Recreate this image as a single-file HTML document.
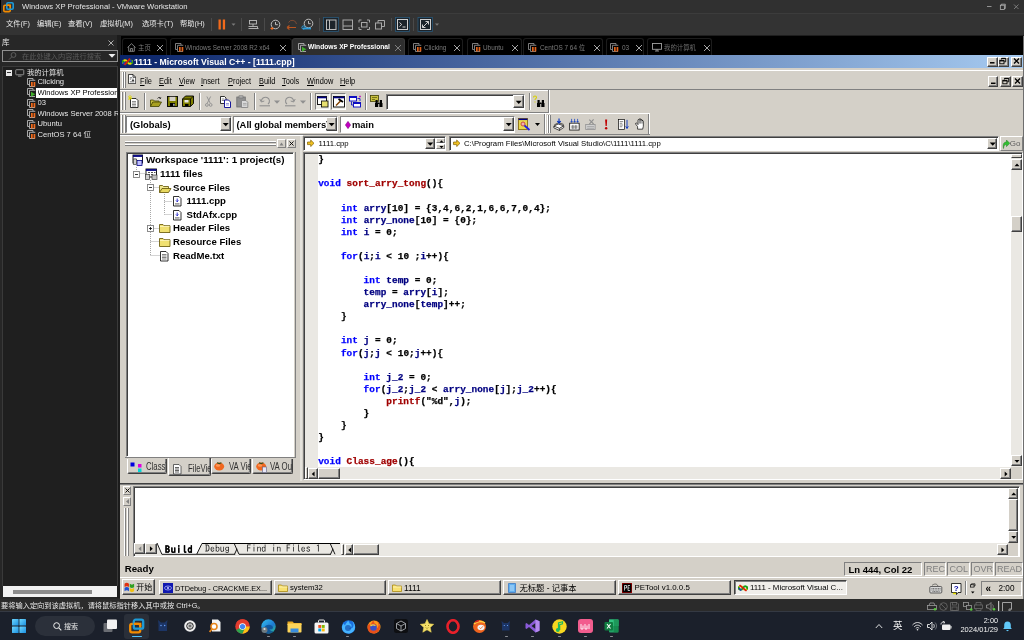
<!DOCTYPE html>
<html lang="zh">
<head>
<meta charset="utf-8">
<title>Windows XP Professional - VMware Workstation</title>
<style>
*{box-sizing:border-box;margin:0;padding:0}
html,body{width:1024px;height:640px;overflow:hidden;background:#1e1e1e}
body{position:relative;font-family:"Liberation Sans","Noto Sans CJK SC",sans-serif;font-size:8px;color:#000}
.a{position:absolute}
.t{position:absolute;white-space:nowrap;line-height:1}
/* ---------- VMware chrome ---------- */
#vmtitle{left:0;top:0;width:1024px;height:13px;background:#303030}
#vmmenu{left:0;top:13px;width:1024px;height:22px;background:#333333}
#lib{left:0;top:35px;width:120px;height:563.5px;background:#272727}
#tabs{left:121px;top:36px;width:903px;height:19px;background:#000}
.vt{position:absolute;top:2px;height:17px;border:1px solid #1c1c1c;border-bottom:none;border-radius:3px 3px 0 0;color:#7d7d7d;font-size:6.4px}
.vt .t{top:5.500px}
.vt .x{position:absolute;top:4px;width:7px;height:7px}
#vmstatus{left:0;top:598.5px;width:1024px;height:12.5px;background:#2b2b2b}
#w11{left:0;top:611px;width:1024px;height:29px;background:#1b202b}
/* ---------- XP guest ---------- */
#xp{left:120px;top:55px;width:903px;height:543.5px;background:#d4d0c8;overflow:hidden}
.xt{font-size:7.8px;color:#000}
.btn3d{position:absolute;background:#d4d0c8;border:1px solid;border-color:#fff #404040 #404040 #fff;box-shadow:inset -1px -1px 0 #808080}
.sunk{position:absolute;background:#fff;border:1px solid;border-color:#808080 #fff #fff #808080;box-shadow:inset 1px 1px 0 #404040}
.code{position:absolute;left:0;top:0;font-family:"Liberation Mono",monospace;font-weight:bold;font-size:9.4px;line-height:12.08px;white-space:pre;color:#000;letter-spacing:0.05px;-webkit-text-stroke:0.25px currentColor}
.k{color:#0000ff}.f{color:#a00000}.v{color:#000080}
</style>
</head>
<body>
<div id="root" style="position:absolute;left:0;top:0;width:1024px;height:640px;will-change:transform">
<div id="vmtitle" class="a">
<div class="a" style="left:0;top:0;width:1px;height:13px;background:#000"></div>
<svg class="a" style="left:3px;top:2px" width="11" height="11" viewBox="0 0 11 11"><rect x="0.8" y="3.2" width="6.4" height="6.4" rx="1.2" fill="none" stroke="#f38b00" stroke-width="1.6"/><rect x="3.8" y="0.8" width="6.4" height="6.4" rx="1.2" fill="none" stroke="#1d9ad6" stroke-width="1.6"/><path d="M3.8 3.2h3.4v1.6" fill="none" stroke="#f38b00" stroke-width="1.6"/></svg>
<div class="t" style="left:22px;top:3px;font-size:7.7px;color:#e4e4e4">Windows XP Professional - VMware Workstation</div>
<svg class="a" style="left:984px;top:2px" width="38" height="10" viewBox="0 0 38 10"><path d="M3 4.500h4.500" stroke="#bdbdbd" stroke-width="0.700"/><rect x="16.300" y="3.200" width="4" height="4.300" fill="none" stroke="#c4c4c4" stroke-width="0.700"/><path d="M17.300 3.200V2.200h4v4.300h-1" fill="none" stroke="#c4c4c4" stroke-width="0.700"/><path d="M30 2.5l4.5 4.5M34.500 2.5l-4.500 4.500" stroke="#8a8a8a" stroke-width="0.8"/></svg>
</div>
<div id="vmmenu" class="a">
<div class="a" style="left:0;top:0;width:1024px;height:1px;background:#3c3c3c"></div>
<div class="t" style="left:6px;top:7px;font-size:7.3px;color:#e8e8e8">文件(F)</div>
<div class="t" style="left:37px;top:7px;font-size:7.3px;color:#e8e8e8">编辑(E)</div>
<div class="t" style="left:68px;top:7px;font-size:7.3px;color:#e8e8e8">查看(V)</div>
<div class="t" style="left:100px;top:7px;font-size:7.3px;color:#e8e8e8">虚拟机(M)</div>
<div class="t" style="left:142px;top:7px;font-size:7.3px;color:#e8e8e8">选项卡(T)</div>
<div class="t" style="left:180px;top:7px;font-size:7.3px;color:#e8e8e8">帮助(H)</div>
<svg class="a" style="left:210px;top:3px" width="240" height="17" viewBox="0 0 240 17">
<rect x="8.500" y="3.500" width="2.300" height="10" fill="#f26a1b"/><rect x="12.800" y="3.500" width="2.300" height="10" fill="#f26a1b"/>
<path d="M21.500 7.500h4l-2 2.200z" fill="#7a7a7a"/>
<path d="M1.500 2v13M31.500 2v13M54.500 2v13M109.500 2v13M181.500 2v13M203.500 2v13" stroke="#4a4a4a" stroke-width="1"/>
<g fill="none" stroke="#bcbcbc" stroke-width="0.9"><rect x="39.500" y="4.500" width="7" height="3.500"/><path d="M43 8v2.500M38.500 12.500h10M38.500 10.500h9v2"/></g>
<g fill="none" stroke-width="1"><circle cx="65.500" cy="8.500" r="4.300" stroke="#bcbcbc"/><path d="M65.500 6v2.700h2.300" stroke="#bcbcbc"/><path d="M60.500 12.500h3M62 11v3" stroke="#f26a1b"/>
<path d="M78.500 6.500a4.300 4.300 0 0 1 8 1.500" stroke="#7a4a34"/><path d="M77 11.500h9M77 11.500l2.500-2M77 11.500l2.500 2" stroke="#b85520" stroke-width="1.200"/>
<circle cx="98.500" cy="7.500" r="4.300" stroke="#bcbcbc"/><path d="M98.500 5v2.700h2.300" stroke="#bcbcbc"/><path d="M93 12.500h8" stroke="#2d9cdb" stroke-width="1.800"/><circle cx="93.500" cy="11.500" r="1.600" stroke="#2d9cdb"/></g>
<rect x="113.500" y="1.500" width="15" height="14" fill="#1c242b" stroke="#2a5878" stroke-width="0.8"/>
<g fill="none" stroke="#bcbcbc" stroke-width="1"><rect x="116.500" y="4" width="9.500" height="9.500"/><path d="M119.500 4v9.500"/>
<rect x="133" y="4" width="9.500" height="9.500" stroke="#a8a8a8"/><path d="M133 10h9.500" stroke="#a8a8a8"/>
<path d="M149 6.500v-2.500h2.500M157 4h2.500v2.500M159.500 11v2.500h-2.500M151.500 13.500h-2.500v-2.500" stroke="#a8a8a8"/><rect x="151.500" y="6.500" width="5.500" height="4.500" stroke="#a8a8a8"/>
<rect x="165.500" y="7" width="6" height="6" stroke="#a8a8a8"/><path d="M168 7v-2.500h6.500v6h-3" stroke="#a8a8a8"/></g>
<rect x="185.500" y="1.500" width="14" height="14" fill="#1c242b" stroke="#2a5878" stroke-width="0.8"/>
<g fill="none" stroke="#cfcfcf" stroke-width="1"><rect x="187.500" y="3.500" width="10" height="10"/><path d="M189.500 6.500l2.200 2-2.200 2M192.500 11h3"/></g>
<rect x="208" y="1.500" width="14.500" height="14" fill="#1c242b" stroke="#2a5878" stroke-width="0.800"/>
<g fill="none" stroke="#cfcfcf" stroke-width="1"><rect x="210.500" y="3.500" width="10" height="10"/><path d="M212.500 11.500l6-6M215.500 5.500h3v3M212.500 8.500v3h3"/></g>
<path d="M225 7.500h4l-2 2.200z" fill="#7a7a7a"/>
</svg>
</div>
<div id="lib" class="a">
<div class="a" style="left:117px;top:0;width:3px;height:563px;background:#1c1c1c"></div>
<div class="t" style="left:2px;top:4px;font-size:7.5px;color:#e6e6e6">库</div>
<svg class="a" style="left:107px;top:4px" width="8" height="8" viewBox="0 0 8 8"><path d="M1.500 1.500l5 5M6.500 1.500l-5 5" stroke="#d0d0d0" stroke-width="0.800"/></svg>
<div class="a" style="left:2px;top:15px;width:116px;height:12px;border:1px solid #8e8e8e;background:#262626"></div>
<svg class="a" style="left:8px;top:17px" width="9" height="8" viewBox="0 0 9 8"><circle cx="5.500" cy="3" r="2.400" fill="none" stroke="#6a6a6a" stroke-width="0.800"/><path d="M3.800 4.800l-2.800 2.800" stroke="#6a6a6a" stroke-width="0.800"/></svg>
<div class="t" style="left:22px;top:17.500px;font-size:7.2px;color:#5a5a5a">在此处键入内容进行搜索</div>
<svg class="a" style="left:108px;top:18px" width="8" height="6" viewBox="0 0 8 6"><path d="M0.500 1h7l-3.500 3.800z" fill="#f0f0f0"/></svg>
<div class="a" style="left:2px;top:31px;width:116px;height:520px;border:1px solid #3a3a3a;border-bottom:none;background:#1f1f1f"></div>
<div class="a" style="left:6px;top:35px;width:6px;height:5.500px;background:#e8e8e8"></div><div class="a" style="left:7px;top:37.300px;width:4px;height:1px;background:#333"></div>
<svg class="a" style="left:15px;top:33.500px" width="9.500" height="8" viewBox="0 0 10 9"><rect x="0.500" y="0.800" width="9" height="5.700" rx="0.600" fill="none" stroke="#a8a8a8" stroke-width="0.900"/><path d="M3 8h4" stroke="#a8a8a8" stroke-width="0.900"/></svg>
<div class="t" style="left:27px;top:33.500px;font-size:7.3px;color:#e6e6e6">我的计算机</div>
<svg class="a" style="left:27px;top:42.5px" width="9" height="9" viewBox="0 0 9 9"><path d="M2.500 6.500h-2v-6h5.500v1.500" fill="none" stroke="#b8b8b8" stroke-width="0.9"/><path d="M8 8.500h-5.500v-6.200h5.800" fill="none" stroke="#b8b8b8" stroke-width="0.900"/><rect x="4" y="4" width="1.700" height="4.500" fill="#f26a1b"/><rect x="6.600" y="4" width="1.700" height="4.500" fill="#f26a1b"/></svg>
<div class="t" style="left:37.500px;top:43px;font-size:7.6px;color:#e6e6e6;width:80px;overflow:hidden">Clicking</div>
<svg class="a" style="left:27px;top:53.0px" width="9" height="9" viewBox="0 0 9 9"><path d="M2.500 6.500h-2v-6h5.500v1.500" fill="none" stroke="#b8b8b8" stroke-width="0.9"/><path d="M8 8.500h-5.500v-6.200h5.800" fill="none" stroke="#b8b8b8" stroke-width="0.900"/><path d="M4 3.800l4.300 2.500-4.300 2.500z" fill="#3fae2a"/></svg>
<div class="a" style="left:36px;top:52.5px;width:81px;height:10px;background:#fff"></div>
<div class="t" style="left:37.500px;top:53.5px;font-size:7.6px;color:#000;width:79px;overflow:hidden">Windows XP Profession</div>
<svg class="a" style="left:27px;top:63.5px" width="9" height="9" viewBox="0 0 9 9"><path d="M2.500 6.500h-2v-6h5.500v1.500" fill="none" stroke="#b8b8b8" stroke-width="0.9"/><path d="M8 8.500h-5.500v-6.200h5.800" fill="none" stroke="#b8b8b8" stroke-width="0.900"/><rect x="4" y="4" width="1.700" height="4.500" fill="#f26a1b"/><rect x="6.600" y="4" width="1.700" height="4.500" fill="#f26a1b"/></svg>
<div class="t" style="left:37.500px;top:64px;font-size:7.6px;color:#e6e6e6;width:80px;overflow:hidden">03</div>
<svg class="a" style="left:27px;top:74.0px" width="9" height="9" viewBox="0 0 9 9"><path d="M2.500 6.500h-2v-6h5.500v1.500" fill="none" stroke="#b8b8b8" stroke-width="0.9"/><path d="M8 8.500h-5.500v-6.200h5.800" fill="none" stroke="#b8b8b8" stroke-width="0.900"/><rect x="4" y="4" width="1.700" height="4.500" fill="#f26a1b"/><rect x="6.600" y="4" width="1.700" height="4.500" fill="#f26a1b"/></svg>
<div class="t" style="left:37.500px;top:74.5px;font-size:7.6px;color:#e6e6e6;width:80px;overflow:hidden">Windows Server 2008 R</div>
<svg class="a" style="left:27px;top:84.5px" width="9" height="9" viewBox="0 0 9 9"><path d="M2.500 6.500h-2v-6h5.500v1.500" fill="none" stroke="#b8b8b8" stroke-width="0.9"/><path d="M8 8.500h-5.500v-6.200h5.800" fill="none" stroke="#b8b8b8" stroke-width="0.900"/><rect x="4" y="4" width="1.700" height="4.500" fill="#f26a1b"/><rect x="6.600" y="4" width="1.700" height="4.500" fill="#f26a1b"/></svg>
<div class="t" style="left:37.500px;top:85px;font-size:7.6px;color:#e6e6e6;width:80px;overflow:hidden">Ubuntu</div>
<svg class="a" style="left:27px;top:95.0px" width="9" height="9" viewBox="0 0 9 9"><path d="M2.500 6.500h-2v-6h5.500v1.500" fill="none" stroke="#b8b8b8" stroke-width="0.9"/><path d="M8 8.500h-5.500v-6.200h5.800" fill="none" stroke="#b8b8b8" stroke-width="0.900"/><rect x="4" y="4" width="1.700" height="4.500" fill="#f26a1b"/><rect x="6.600" y="4" width="1.700" height="4.500" fill="#f26a1b"/></svg>
<div class="t" style="left:37.500px;top:95.5px;font-size:7.6px;color:#e6e6e6;width:80px;overflow:hidden">CentOS 7 64 位</div>

<div class="a" style="left:3px;top:551px;width:114px;height:11px;background:#f1f1f1"></div>
<div class="a" style="left:13px;top:554.500px;width:79px;height:4px;background:#8c8c8c"></div>
</div>
<div id="tabs" class="a">
<div class="vt" style="left:1px;width:45px;"><svg class="a" style="left:4px;top:3.500px" width="9" height="9" viewBox="0 0 9 9"><path d="M0.500 4.500l4-3.800 4 3.800M1.700 3.800v4.500h5.600v-4.500M3.600 8.300v-2.800h1.800v2.800" fill="none" stroke="#9a9a9a" stroke-width="0.8"/></svg><div class="t" style="left:15px;color:#7a7a7a">主页</div><svg class="a" style="left:33px;top:4.500px" width="8" height="8" viewBox="0 0 8 8"><path d="M1 1l6 6M7 1l-6 6" stroke="#b8b8b8" stroke-width="0.900"/></svg></div>
<div class="vt" style="left:49px;width:122px;"><svg class="a" style="left:4px;top:3.500px" width="9" height="9" viewBox="0 0 9 9"><path d="M2.500 6.500h-2v-6h5.500v1.500" fill="none" stroke="#8a8a8a" stroke-width="0.9"/><path d="M8 8.500h-5.500v-6.200h5.800" fill="none" stroke="#8a8a8a" stroke-width="0.900"/><rect x="4" y="4" width="1.700" height="4.500" fill="#e0621a"/><rect x="6.600" y="4" width="1.700" height="4.500" fill="#e0621a"/></svg><div class="t" style="left:14px;color:#7a7a7a">Windows Server 2008 R2 x64</div><svg class="a" style="left:108px;top:4.500px" width="8" height="8" viewBox="0 0 8 8"><path d="M1 1l6 6M7 1l-6 6" stroke="#b8b8b8" stroke-width="0.900"/></svg></div>
<div class="vt" style="left:171px;width:113px;background:#2e2e2e;border-color:#3a3a3a;"><svg class="a" style="left:5px;top:3.500px" width="9" height="9" viewBox="0 0 9 9"><path d="M2.500 6.500h-2v-6h5.500v1.500" fill="none" stroke="#b0b0b0" stroke-width="0.9"/><path d="M8 8.500h-5.500v-6.200h5.800" fill="none" stroke="#b0b0b0" stroke-width="0.900"/><path d="M4 3.800l4.300 2.500-4.300 2.500z" fill="#3fae2a"/></svg><div class="t" style="left:15px;top:5px;color:#fff;font-weight:bold;font-size:6.7px">Windows XP Professional</div><svg class="a" style="left:101px;top:4.500px" width="8" height="8" viewBox="0 0 8 8"><path d="M1 1l6 6M7 1l-6 6" stroke="#8a8a8a" stroke-width="0.900"/></svg></div>
<div class="vt" style="left:287px;width:55px;"><svg class="a" style="left:4px;top:3.500px" width="9" height="9" viewBox="0 0 9 9"><path d="M2.500 6.500h-2v-6h5.500v1.500" fill="none" stroke="#8a8a8a" stroke-width="0.9"/><path d="M8 8.500h-5.500v-6.200h5.800" fill="none" stroke="#8a8a8a" stroke-width="0.900"/><rect x="4" y="4" width="1.700" height="4.500" fill="#e0621a"/><rect x="6.600" y="4" width="1.700" height="4.500" fill="#e0621a"/></svg><div class="t" style="left:15px;color:#7a7a7a">Clicking</div><svg class="a" style="left:44px;top:4.500px" width="8" height="8" viewBox="0 0 8 8"><path d="M1 1l6 6M7 1l-6 6" stroke="#b8b8b8" stroke-width="0.900"/></svg></div>
<div class="vt" style="left:346px;width:55px;"><svg class="a" style="left:4px;top:3.500px" width="9" height="9" viewBox="0 0 9 9"><path d="M2.500 6.500h-2v-6h5.500v1.500" fill="none" stroke="#8a8a8a" stroke-width="0.9"/><path d="M8 8.500h-5.500v-6.200h5.800" fill="none" stroke="#8a8a8a" stroke-width="0.900"/><rect x="4" y="4" width="1.700" height="4.500" fill="#e0621a"/><rect x="6.600" y="4" width="1.700" height="4.500" fill="#e0621a"/></svg><div class="t" style="left:15px;color:#7a7a7a">Ubuntu</div><svg class="a" style="left:43px;top:4.500px" width="8" height="8" viewBox="0 0 8 8"><path d="M1 1l6 6M7 1l-6 6" stroke="#b8b8b8" stroke-width="0.900"/></svg></div>
<div class="vt" style="left:402px;width:80px;"><svg class="a" style="left:4px;top:3.500px" width="9" height="9" viewBox="0 0 9 9"><path d="M2.500 6.500h-2v-6h5.500v1.500" fill="none" stroke="#8a8a8a" stroke-width="0.9"/><path d="M8 8.500h-5.500v-6.200h5.800" fill="none" stroke="#8a8a8a" stroke-width="0.900"/><rect x="4" y="4" width="1.700" height="4.500" fill="#e0621a"/><rect x="6.600" y="4" width="1.700" height="4.500" fill="#e0621a"/></svg><div class="t" style="left:16px;color:#7a7a7a">CentOS 7 64 位</div><svg class="a" style="left:69px;top:4.500px" width="8" height="8" viewBox="0 0 8 8"><path d="M1 1l6 6M7 1l-6 6" stroke="#b8b8b8" stroke-width="0.900"/></svg></div>
<div class="vt" style="left:485px;width:38px;"><svg class="a" style="left:3px;top:3.500px" width="9" height="9" viewBox="0 0 9 9"><path d="M2.500 6.500h-2v-6h5.500v1.500" fill="none" stroke="#8a8a8a" stroke-width="0.9"/><path d="M8 8.500h-5.500v-6.200h5.800" fill="none" stroke="#8a8a8a" stroke-width="0.900"/><rect x="4" y="4" width="1.700" height="4.500" fill="#e0621a"/><rect x="6.600" y="4" width="1.700" height="4.500" fill="#e0621a"/></svg><div class="t" style="left:15px;color:#7a7a7a">03</div><svg class="a" style="left:28px;top:4.500px" width="8" height="8" viewBox="0 0 8 8"><path d="M1 1l6 6M7 1l-6 6" stroke="#b8b8b8" stroke-width="0.900"/></svg></div>
<div class="vt" style="left:526px;width:65px;"><svg class="a" style="left:4px;top:4px" width="10" height="9" viewBox="0 0 10 9"><rect x="0.500" y="0.500" width="9" height="5.800" fill="none" stroke="#a0a0a0" stroke-width="0.900"/><path d="M3 8h4M5 6.300v1.700" stroke="#a0a0a0" stroke-width="0.900"/></svg><div class="t" style="left:16px;color:#6c6c6c">我的计算机</div><svg class="a" style="left:55px;top:4.500px" width="8" height="8" viewBox="0 0 8 8"><path d="M1 1l6 6M7 1l-6 6" stroke="#b8b8b8" stroke-width="0.900"/></svg></div>
</div>
<!--XP-START--><div id="xp" class="a">
<div class="a" style="left:0px;top:0px;width:903px;height:12.7px;background:linear-gradient(90deg,#0a246a 0%,#a6caf0 100%)"></div>
<svg class="a" style="left:2px;top:2px" width="11" height="10" viewBox="0 0 11 10"><path d="M1 6.500c0-4 3-4 4.500-1.500s4.500 2.500 4.500-1.500" fill="none" stroke="#e8d800" stroke-width="2"/><path d="M1 3.500c0 4 3 4 4.500 1.500s4.500-2.500 4.500 1.500" fill="none" stroke="#18a018" stroke-width="2"/><path d="M1.200 5.500l2 2" stroke="#2030d0" stroke-width="1.800"/><path d="M8 3l1.500 2" stroke="#2030d0" stroke-width="1.600"/><path d="M2.500 8l5.500-6.500" stroke="#e01010" stroke-width="1.800"/></svg>
<div class="t" style="left:14px;top:3.05px;font-size:8.7px;color:#fff;font-weight:bold">1111 - Microsoft Visual C++ - [1111.cpp]</div>
<div class="btn3d" style="left:867px;top:1.5px;width:10.5px;height:10px;"><svg class="a" style="left:-1.200px;top:-1.200px" width="10.5" height="10"><path d="M3 6.8 h4.5" stroke="#000" stroke-width="1.500"/></svg></div>
<div class="btn3d" style="left:877.5px;top:1.5px;width:11.5px;height:10px;"><svg class="a" style="left:-1.200px;top:-1.200px" width="11.5" height="10"><rect x="2.800" y="4.300" width="4.200" height="3.500" fill="none" stroke="#000" stroke-width="0.900"/><path d="M2.800 4.800h4.200" stroke="#000" stroke-width="1.200"/><path d="M4.500 3.500v-1.200h4.200v3.500h-1.500M4.500 2.500h4.200" fill="none" stroke="#000" stroke-width="0.900"/></svg></div>
<div class="btn3d" style="left:891px;top:1.5px;width:11px;height:10px;"><svg class="a" style="left:-1.200px;top:-1.200px" width="11" height="10"><path d="M3 2.500l5 5M8 2.500l-5 5" stroke="#000" stroke-width="1.300"/></svg></div>
<div class="a" style="left:0px;top:14.7px;width:903px;height:1px;background:#fff"></div>
<div class="a" style="left:1.5px;top:16.5px;width:1px;height:16.5px;background:#fff"></div>
<div class="a" style="left:2.5px;top:16.5px;width:0.8px;height:16.5px;background:#808080"></div>
<div class="a" style="left:4.2px;top:16.5px;width:1px;height:16.5px;background:#fff"></div>
<div class="a" style="left:5.2px;top:16.5px;width:0.8px;height:16.5px;background:#808080"></div>
<svg class="a" style="left:8px;top:18.8px" width="8.2" height="10.2" viewBox="0 0 9 11"><path d="M0.500 0.500h5l3 3v7h-8z" fill="#fff" stroke="#000" stroke-width="0.800"/><path d="M5.500 0.500v3h3" fill="none" stroke="#000" stroke-width="0.800"/><path d="M2 4h2.500M2 5.500h1.500M2 8.500h5" stroke="#404040" stroke-width="0.800"/><path d="M5.500 5v2.500M4.300 6.500l1.200 1.300 1.200-1.300" stroke="#000" stroke-width="0.800" fill="none"/></svg>
<div class="t" style="left:20px;top:22.45px;font-size:8.7px;transform:scaleX(0.85);transform-origin:0 50%"><u>F</u>ile</div>
<div class="t" style="left:39px;top:22.45px;font-size:8.7px;transform:scaleX(0.85);transform-origin:0 50%"><u>E</u>dit</div>
<div class="t" style="left:59px;top:22.45px;font-size:8.7px;transform:scaleX(0.85);transform-origin:0 50%"><u>V</u>iew</div>
<div class="t" style="left:81px;top:22.45px;font-size:8.7px;transform:scaleX(0.85);transform-origin:0 50%"><u>I</u>nsert</div>
<div class="t" style="left:108px;top:22.45px;font-size:8.7px;transform:scaleX(0.85);transform-origin:0 50%"><u>P</u>roject</div>
<div class="t" style="left:139px;top:22.45px;font-size:8.7px;transform:scaleX(0.85);transform-origin:0 50%"><u>B</u>uild</div>
<div class="t" style="left:162px;top:22.45px;font-size:8.7px;transform:scaleX(0.85);transform-origin:0 50%"><u>T</u>ools</div>
<div class="t" style="left:187px;top:22.45px;font-size:8.7px;transform:scaleX(0.85);transform-origin:0 50%"><u>W</u>indow</div>
<div class="t" style="left:220px;top:22.45px;font-size:8.7px;transform:scaleX(0.85);transform-origin:0 50%"><u>H</u>elp</div>
<div class="btn3d" style="left:868px;top:21px;width:10px;height:10.5px;"><svg class="a" style="left:-1.200px;top:-1.200px" width="10" height="10.5"><path d="M3 7.3 h4.5" stroke="#000" stroke-width="1.500"/></svg></div>
<div class="btn3d" style="left:880px;top:21px;width:10.5px;height:10.5px;"><svg class="a" style="left:-1.200px;top:-1.200px" width="10.5" height="10.5"><rect x="2.800" y="4.300" width="4.200" height="3.500" fill="none" stroke="#000" stroke-width="0.900"/><path d="M2.800 4.800h4.200" stroke="#000" stroke-width="1.200"/><path d="M4.500 3.500v-1.200h4.200v3.500h-1.500M4.500 2.500h4.200" fill="none" stroke="#000" stroke-width="0.900"/></svg></div>
<div class="btn3d" style="left:892px;top:21px;width:11px;height:10.5px;"><svg class="a" style="left:-1.200px;top:-1.200px" width="11" height="10.5"><path d="M3 2.500l5 5M8 2.500l-5 5" stroke="#000" stroke-width="1.300"/></svg></div>
<div class="a" style="left:0px;top:33.5px;width:903px;height:1px;background:#808080"></div>
<div class="a" style="left:0px;top:34.5px;width:428px;height:1px;background:#fff"></div>
<div class="a" style="left:427.5px;top:34.5px;width:1px;height:23px;background:#808080"></div>
<div class="a" style="left:428.5px;top:34.5px;width:1px;height:23px;background:#fff"></div>
<div class="a" style="left:0px;top:56.5px;width:429px;height:1px;background:#808080"></div>
<div class="a" style="left:0px;top:57.5px;width:530px;height:1px;background:#fff"></div>
<div class="a" style="left:1px;top:37px;width:1px;height:18px;background:#fff"></div>
<div class="a" style="left:2px;top:37px;width:1px;height:18px;background:#808080"></div>
<div class="a" style="left:3.5px;top:37px;width:1px;height:18px;background:#fff"></div>
<div class="a" style="left:4.5px;top:37px;width:1px;height:18px;background:#808080"></div>
<div class="a" style="left:24px;top:38px;width:1px;height:17px;background:#808080"></div>
<div class="a" style="left:25px;top:38px;width:1px;height:17px;background:#fff"></div>
<div class="a" style="left:79px;top:38px;width:1px;height:17px;background:#808080"></div>
<div class="a" style="left:80px;top:38px;width:1px;height:17px;background:#fff"></div>
<div class="a" style="left:134px;top:38px;width:1px;height:17px;background:#808080"></div>
<div class="a" style="left:135px;top:38px;width:1px;height:17px;background:#fff"></div>
<div class="a" style="left:190px;top:38px;width:1px;height:17px;background:#808080"></div>
<div class="a" style="left:191px;top:38px;width:1px;height:17px;background:#fff"></div>
<div class="a" style="left:245px;top:38px;width:1px;height:17px;background:#808080"></div>
<div class="a" style="left:246px;top:38px;width:1px;height:17px;background:#fff"></div>
<div class="a" style="left:409px;top:38px;width:1px;height:17px;background:#808080"></div>
<div class="a" style="left:410px;top:38px;width:1px;height:17px;background:#fff"></div>
<svg class="a" style="left:8px;top:39.5px" width="12" height="14" viewBox="0 0 12 14"><path d="M2.500 3.500h5.500l2 2v7h-7.500z" fill="#fff" stroke="#000" stroke-width="0.800"/><path d="M4 6.500h4M4 8h4M4 9.500h4M4 11h4" stroke="#606060" stroke-width="0.700"/><path d="M0 1.500l4 2.500M2 0v5M0 4.500l4-3" stroke="#e0d800" stroke-width="0.900"/></svg>
<svg class="a" style="left:30px;top:41px" width="12" height="11" viewBox="0 0 12 11"><path d="M0.500 10.500v-6.500h3l1 1h4.500v1.500" fill="#c8c040" stroke="#404000" stroke-width="0.800"/><path d="M0.500 10.500l2.300-4.500h8.700l-2.500 4.500z" fill="#a8a020" stroke="#404000" stroke-width="0.800"/><path d="M7.500 2.500c1-1.500 2.500-1.500 3 0M10.500 2.500l-1.200-0.300M10.500 2.500l0.300-1.200" fill="none" stroke="#000" stroke-width="0.700"/></svg>
<svg class="a" style="left:47px;top:41px" width="11" height="11" viewBox="0 0 11 11"><rect x="0.500" y="0.500" width="10" height="10" fill="#808000" stroke="#000" stroke-width="0.900"/><rect x="2.500" y="0.800" width="6" height="4.200" fill="#d4d0c8"/><rect x="3" y="7" width="5" height="3.300" fill="#000"/><rect x="6.300" y="7.800" width="1.200" height="2" fill="#e8e8e8"/></svg>
<svg class="a" style="left:62px;top:40px" width="12" height="12" viewBox="0 0 12 12"><path d="M0.500 4l3-3h8v7.500l-3 3h-8z" fill="#808000" stroke="#000" stroke-width="0.900"/><path d="M0.500 4h8v7.500M8.500 4l3-3" fill="none" stroke="#000" stroke-width="0.800"/><rect x="2.500" y="5" width="4" height="2.500" fill="#e8e8e8"/><rect x="3" y="9" width="3.500" height="2" fill="#000"/></svg>
<svg class="a" style="left:85.3px;top:40.8px" width="7.5" height="11.3" viewBox="0 0 8 12"><path d="M2 0.500l3.500 7M6 0.500l-3.500 7" stroke="#909090" stroke-width="1"/><circle cx="2" cy="9.500" r="1.500" fill="none" stroke="#909090" stroke-width="1"/><circle cx="6" cy="9.500" r="1.500" fill="none" stroke="#909090" stroke-width="1"/></svg>
<svg class="a" style="left:100px;top:41px" width="12" height="12" viewBox="0 0 12 12"><path d="M0.500 0.500h4l1.500 1.500v5.500h-5.500z" fill="#fff" stroke="#000" stroke-width="0.800"/><path d="M1.800 3h2.500M1.800 4.500h2.500" stroke="#404040" stroke-width="0.600"/><path d="M4.500 4h4l2 2v5.500h-6z" fill="#fff" stroke="#000090" stroke-width="0.900"/><path d="M6 7.500h3M6 9h3" stroke="#5050c0" stroke-width="0.600"/></svg>
<svg class="a" style="left:116px;top:40px" width="13" height="13" viewBox="0 0 13 13"><rect x="0.800" y="2" width="8.500" height="10" fill="#909090" stroke="#707070" stroke-width="0.800"/><rect x="3" y="0.800" width="4" height="2.200" fill="#b0b0b0" stroke="#707070" stroke-width="0.600"/><path d="M5.500 5.500h4.500l1.800 1.800v5.200h-6.300z" fill="#d8d8d8" stroke="#808080" stroke-width="0.800"/><path d="M7 8.500h3.500M7 10h3.500" stroke="#909090" stroke-width="0.600"/></svg>
<svg class="a" style="left:139px;top:40.5px" width="48" height="11" viewBox="0 0 48 11"><path d="M2.500 5.500a4 3.800 0 1 1 6.500 2.500" fill="none" stroke="#909090" stroke-width="1.100"/><path d="M0.800 3l1.500 3 3-1" fill="none" stroke="#909090" stroke-width="1"/><path d="M0.500 9.800h10.500" stroke="#909090" stroke-width="1.100"/><path d="M15 4.500h6l-3 3.200z" fill="#909090"/><path d="M34.500 5.500a4 3.800 0 1 0-6.500 2.500" fill="none" stroke="#909090" stroke-width="1.100"/><path d="M36.200 3l-1.500 3-3-1" fill="none" stroke="#909090" stroke-width="1"/><path d="M26 9.800h10.500" stroke="#909090" stroke-width="1.100"/><path d="M41 4.500h6l-3 3.200z" fill="#909090"/></svg>
<div class="a" style="left:194.5px;top:37.5px;width:15px;height:17px;background:#ecebe6;border:1px solid;border-color:#808080 #fff #fff #808080"></div>
<div class="a" style="left:211px;top:37.5px;width:15px;height:17px;background:#ecebe6;border:1px solid;border-color:#808080 #fff #fff #808080"></div>
<svg class="a" style="left:197px;top:41px" width="12" height="12" viewBox="0 0 12 12"><rect x="0.500" y="0.500" width="9" height="8" fill="#fff" stroke="#000" stroke-width="0.900"/><path d="M0.500 1.500h9" stroke="#000080" stroke-width="1.600"/><rect x="4.500" y="5" width="6.500" height="6" fill="#e8e070" stroke="#000" stroke-width="0.800"/></svg>
<svg class="a" style="left:213px;top:41px" width="12" height="12" viewBox="0 0 12 12"><rect x="0.500" y="0.500" width="11" height="10.500" fill="#fff" stroke="#000" stroke-width="0.900"/><path d="M0.500 1.500h11" stroke="#000080" stroke-width="1.600"/><path d="M3 9.500l5-5" stroke="#804000" stroke-width="1.400"/><path d="M5.500 3l4.500 3" stroke="#000" stroke-width="1.800"/></svg>
<svg class="a" style="left:229px;top:40px" width="13" height="13" viewBox="0 0 13 13"><rect x="0.500" y="1.500" width="7" height="4.500" fill="#fff" stroke="#0000c0" stroke-width="0.900"/><path d="M0.500 2.300h7" stroke="#0000c0" stroke-width="1.300"/><rect x="4.500" y="7.500" width="7" height="4.500" fill="#fff" stroke="#0000c0" stroke-width="0.900"/><path d="M4.500 8.300h7" stroke="#0000c0" stroke-width="1.300"/><path d="M8.500 3.500h2.500v2.500M2.500 6.500v3.500h1.500" fill="none" stroke="#0000c0" stroke-width="0.800"/><path d="M11 0.500v2M10 1.500h2" stroke="#c000c0" stroke-width="0.700"/></svg>
<svg class="a" style="left:250px;top:40px" width="14" height="13" viewBox="0 0 14 13"><rect x="0.500" y="0.500" width="8" height="6" fill="#c8c040" stroke="#404000" stroke-width="0.800"/><path d="M2 2.500h5M2 4.500h3" stroke="#404000" stroke-width="0.600"/><path d="M5.5 8v-3h2.200v3zM9.8 8v-3h2.200v3z" fill="#000"/><rect x="5" y="8" width="3.200" height="4" fill="#000"/><rect x="9.3" y="8" width="3.200" height="4" fill="#000"/><rect x="8" y="7.500" width="1.500" height="1.500" fill="#000"/></svg>
<div class="sunk" style="left:266px;top:38.5px;width:138.5px;height:16.2px;"></div>
<div class="btn3d" style="left:393px;top:39.8px;width:10.5px;height:13.7px;"><svg class="a" style="left:0;top:0" width="10.5" height="13.7"><path d="M1.75 4.65h6l-3 3.300z" fill="#000"/></svg></div>
<svg class="a" style="left:412px;top:40px" width="14" height="13" viewBox="0 0 14 13"><path d="M1.500 2.500c0-2 3-2 3 0c0 1.200-1.500 1.200-1.500 2.500M3 6.500v1" fill="none" stroke="#d8d000" stroke-width="1.100"/><path d="M5.5 8v-3h2.200v3zM9.8 8v-3h2.200v3z" fill="#000"/><rect x="5" y="8" width="3.200" height="4" fill="#000"/><rect x="9.3" y="8" width="3.200" height="4" fill="#000"/><rect x="8" y="7.500" width="1.500" height="1.500" fill="#000"/></svg>
<div class="a" style="left:0px;top:79px;width:530px;height:1px;background:#808080"></div>
<div class="a" style="left:0px;top:80px;width:183px;height:1px;background:#fff"></div>
<div class="a" style="left:423.5px;top:58.5px;width:1px;height:20.5px;background:#808080"></div>
<div class="a" style="left:424.5px;top:58.5px;width:1px;height:20.5px;background:#fff"></div>
<div class="a" style="left:528px;top:58.5px;width:1px;height:20.5px;background:#808080"></div>
<div class="a" style="left:529px;top:58.5px;width:1px;height:20.5px;background:#fff"></div>
<div class="a" style="left:1px;top:60px;width:1px;height:18px;background:#fff"></div>
<div class="a" style="left:2px;top:60px;width:1px;height:18px;background:#808080"></div>
<div class="a" style="left:3.5px;top:60px;width:1px;height:18px;background:#fff"></div>
<div class="a" style="left:4.5px;top:60px;width:1px;height:18px;background:#808080"></div>
<div class="a" style="left:426.5px;top:60px;width:1px;height:18px;background:#fff"></div>
<div class="a" style="left:427.5px;top:60px;width:1px;height:18px;background:#808080"></div>
<div class="a" style="left:429px;top:60px;width:1px;height:18px;background:#fff"></div>
<div class="a" style="left:430px;top:60px;width:1px;height:18px;background:#808080"></div>
<div class="a" style="left:5.5px;top:61px;width:106.2px;height:16.5px;background:#fff;border:1.300px solid;border-color:#808080 #fff #fff #808080;"></div>
<div class="btn3d" style="left:100.3px;top:62.3px;width:10.5px;height:14.2px;"><svg class="a" style="left:0;top:0" width="10.5" height="14.2"><path d="M1.75 4.9h6l-3 3.300z" fill="#000"/></svg></div>
<div class="t" style="left:10px;top:64.8px;font-size:9.4px;font-weight:bold">(Globals)</div>
<div class="a" style="left:113px;top:61px;width:104.5px;height:16.5px;background:#fff;border:1.300px solid;border-color:#808080 #fff #fff #808080;"></div>
<div class="btn3d" style="left:206.3px;top:62.3px;width:10.3px;height:14.2px;"><svg class="a" style="left:0;top:0" width="10.3" height="14.2"><path d="M1.65 4.9h6l-3 3.300z" fill="#000"/></svg></div>
<div class="a" style="left:115.5px;top:63.5px;width:91px;height:12.5px;overflow:hidden"><div class="t" style="left:1px;top:1.300px;font-size:9.400px;font-weight:bold">(All global members)</div></div>
<div class="a" style="left:219.5px;top:61px;width:175px;height:16.5px;background:#fff;border:1.300px solid;border-color:#808080 #fff #fff #808080;"></div>
<div class="btn3d" style="left:383px;top:62.3px;width:10.5px;height:14.2px;"><svg class="a" style="left:0;top:0" width="10.5" height="14.2"><path d="M1.75 4.9h6l-3 3.300z" fill="#000"/></svg></div>
<svg class="a" style="left:224.5px;top:65.5px" width="6" height="8" viewBox="0 0 6 8"><path d="M3 0.300l2.700 3.700-2.700 3.700-2.700-3.700z" fill="#c000c0" stroke="#600060" stroke-width="0.400"/></svg>
<div class="t" style="left:232px;top:64.8px;font-size:9.4px;font-weight:bold">main</div>
<svg class="a" style="left:397px;top:62px" width="25" height="15" viewBox="0 0 25 15"><rect x="1.500" y="1.500" width="9" height="11" fill="#e8d850" stroke="#806000" stroke-width="0.800"/><path d="M1.500 2.300h9" stroke="#000080" stroke-width="1.500"/><circle cx="6" cy="7" r="2" fill="#f0b0b0" stroke="#c03030" stroke-width="0.800"/><path d="M7.500 8.500l5 4.500" stroke="#2020e0" stroke-width="1.800"/><path d="M18 6h5l-2.500 3z" fill="#000"/></svg>
<svg class="a" style="left:432.98px;top:63.35px" width="12.04" height="12.9" viewBox="0 0 14 15"><path d="M1 9.500l5-2.500 6.500 2-5 3zM1 9.500v2l6.500 3v-2M12.500 9v2l-5 3.500" fill="#fff" stroke="#000" stroke-width="0.800"/><path d="M1.500 8l5-2.500 6 2" fill="none" stroke="#000" stroke-width="0.700"/><path d="M7 0.500v5M5 3.500l2 2.500 2-2.500" stroke="#0030c0" stroke-width="1.300" fill="none"/></svg>
<svg class="a" style="left:449.41px;top:63.35px" width="11.18" height="12.9" viewBox="0 0 13 15"><rect x="0.800" y="6" width="11" height="8" fill="#fff" stroke="#000" stroke-width="0.900"/><path d="M2.500 9.500h7.500M2.500 11.500h7.500M4.500 8v5M8 8v5" stroke="#404040" stroke-width="0.700"/><path d="M3 1v4M6.500 1v4M10 1v4M2 3.500l1 1.500 1-1.500M5.500 3.500l1 1.500 1-1.500M9 3.500l1 1.500 1-1.500" stroke="#0030c0" stroke-width="0.800" fill="none"/></svg>
<svg class="a" style="left:464.91px;top:63.35px" width="11.18" height="12.9" viewBox="0 0 13 15"><rect x="0.800" y="7.500" width="11" height="6" fill="#d0d0d0" stroke="#909090" stroke-width="0.900"/><path d="M2.500 10h8M2.500 12h8" stroke="#909090" stroke-width="0.700"/><path d="M5 2l5 5M10 1.500l-5 5.500" stroke="#909090" stroke-width="1.300"/></svg>
<svg class="a" style="left:484.35px;top:64.21px" width="4.3" height="11.18" viewBox="0 0 5 13"><path d="M1.300 0.500h2.400l-0.500 7.500h-1.400z" fill="#c00000"/><circle cx="2.500" cy="10.800" r="1.400" fill="#c00000"/></svg>
<svg class="a" style="left:497.91px;top:64.21px" width="11.18" height="11.18" viewBox="0 0 13 13"><rect x="0.500" y="0.500" width="7" height="11.500" fill="#fff" stroke="#000" stroke-width="0.800"/><path d="M2 3h4M2 5h3M2 7h4M2 9h3" stroke="#404040" stroke-width="0.700"/><path d="M10.500 1v10M9 8.500l1.500 2.500 1.500-2.500" stroke="#0030c0" stroke-width="1" fill="none"/></svg>
<svg class="a" style="left:514.84px;top:63.28px" width="10.32" height="12.04" viewBox="0 0 12 14"><path d="M3 13v-3l-2.300-3c-0.500-1 0.800-1.800 1.500-0.800l1.300 1.500v-5.200c0-1 1.500-1 1.500 0v-1c0-1 1.600-1 1.600 0v1c0-1 1.600-1 1.600 0v1c0-0.800 1.500-0.800 1.500 0.200v6l-0.800 3.300z" fill="#fff" stroke="#000" stroke-width="0.800"/><path d="M5 2.500v4M6.600 2v4.500M8.200 2.500v4" stroke="#000" stroke-width="0.600"/></svg>
<div class="a" style="left:4.5px;top:86px;width:151.5px;height:1px;background:#fff"></div>
<div class="a" style="left:4.5px;top:87px;width:151.5px;height:1px;background:#808080"></div>
<div class="a" style="left:4.5px;top:89px;width:151.5px;height:1px;background:#fff"></div>
<div class="a" style="left:4.5px;top:90px;width:151.5px;height:1px;background:#808080"></div>
<div class="btn3d" style="left:157px;top:84px;width:8.5px;height:8.5px;border-color:#fff #808080 #808080 #fff;box-shadow:none"><svg class="a" style="left:0;top:0" width="8" height="8"><path d="M1.500 5.500h4l-2-3z" fill="#808080"/></svg></div>
<div class="btn3d" style="left:167px;top:84px;width:8.5px;height:8.5px;border-color:#fff #808080 #808080 #fff;box-shadow:none"><svg class="a" style="left:0;top:0" width="8" height="8"><path d="M1.500 1.500l4 4M5.500 1.500l-4 4" stroke="#000" stroke-width="0.900"/></svg></div>
<div class="a" style="left:179.5px;top:81px;width:2.5px;height:345px;background:#e4e2dc"></div>
<div class="sunk" style="left:183px;top:80.5px;width:143px;height:15px;"></div>
<svg class="a" style="left:186.5px;top:83.8px" width="8" height="8" viewBox="0 0 8 8"><path d="M0.500 3h3.200v-2l3.300 3.300-3.300 3.300v-2h-3.200z" fill="#f0c020" stroke="#806000" stroke-width="0.700"/></svg>
<div class="t" style="left:198.5px;top:85.03px;font-size:7.75px;">1111.cpp</div>
<div class="btn3d" style="left:305px;top:82.5px;width:9.5px;height:11.5px;"><svg class="a" style="left:0;top:0" width="9.5" height="11.5"><path d="M1.25 3.55h6l-3 3.300z" fill="#000"/></svg></div>
<div class="btn3d" style="left:315.5px;top:82.5px;width:9.5px;height:5.5px;box-shadow:none;border-color:#fff #808080 #808080 #fff"><svg class="a" style="left:0;top:0" width="9" height="5"><path d="M2.500 3.500h4l-2-2.200z" fill="#000"/></svg></div>
<div class="btn3d" style="left:315.5px;top:88.5px;width:9.5px;height:5.5px;box-shadow:none;border-color:#fff #808080 #808080 #fff"><svg class="a" style="left:0;top:0" width="9" height="5"><path d="M2.500 1h4l-2 2.200z" fill="#000"/></svg></div>
<div class="sunk" style="left:329px;top:80.5px;width:549.5px;height:15px;"></div>
<svg class="a" style="left:332.5px;top:83.8px" width="8" height="8" viewBox="0 0 8 8"><path d="M0.500 3h3.200v-2l3.300 3.300-3.300 3.300v-2h-3.200z" fill="#f0c020" stroke="#806000" stroke-width="0.700"/></svg>
<div class="t" style="left:344px;top:85.03px;font-size:7.75px;">C:\Program Files\Microsoft Visual Studio\C\1111\1111.cpp</div>
<div class="btn3d" style="left:866.5px;top:82.5px;width:10.5px;height:11.5px;"><svg class="a" style="left:0;top:0" width="10.5" height="11.5"><path d="M1.75 3.55h6l-3 3.300z" fill="#000"/></svg></div>
<div class="btn3d" style="left:880px;top:81px;width:22.5px;height:14.5px;box-shadow:none;border-color:#fff #808080 #808080 #fff"><svg class="a" style="left:0;top:0" width="22" height="14"><path d="M2.500 11.500c-1-4.500 0.500-6.500 3-6.500v-2l3.300 3.300-3.300 3.300v-2c-1.700 0-2.700 1-3 3.900z" fill="#30c030" stroke="#208020" stroke-width="0.500"/></svg><div class="t" style="left:8.700px;top:2.500px;font-size:8px;color:#606060">Go</div></div>
<div class="sunk" style="left:5.5px;top:97px;width:168px;height:304.5px;"></div>
<div class="a" style="left:174.5px;top:97px;width:1px;height:305.5px;background:#808080"></div>
<div class="a" style="left:5px;top:402px;width:170.5px;height:1px;background:#808080"></div>
<div class="t" style="left:26px;top:100.4px;font-size:9.8px;font-weight:bold">Workspace '1111': 1 project(s)</div>
<div class="t" style="left:40px;top:114.05px;font-size:9.9px;font-weight:bold">1111 files</div>
<div class="t" style="left:53px;top:127.8px;font-size:9.6px;font-weight:bold">Source Files</div>
<div class="t" style="left:66.5px;top:141.4px;font-size:9.6px;font-weight:bold">1111.cpp</div>
<div class="t" style="left:66.5px;top:154.9px;font-size:9.6px;font-weight:bold">StdAfx.cpp</div>
<div class="t" style="left:53px;top:168.4px;font-size:9.6px;font-weight:bold">Header Files</div>
<div class="t" style="left:53px;top:182px;font-size:9.6px;font-weight:bold">Resource Files</div>
<div class="t" style="left:53px;top:195.6px;font-size:9.6px;font-weight:bold">ReadMe.txt</div>
<svg class="a" style="left:6px;top:98px" width="60" height="110" viewBox="0 0 60 110"><path d="M10.500 14v7M13.500 20.500h6M24.500 27v75.500M27.500 34.500h6M38.500 41v20.500M38.500 48.500h8M38.500 61.500h8M27.500 75.500h6M24.500 88.500h9M24.500 102.500h9" fill="none" stroke="#a8a8a8" stroke-width="1" stroke-dasharray="1 1"/></svg>
<svg class="a" style="left:13px;top:115.5px" width="7" height="7" viewBox="0 0 7 7"><rect x="0.500" y="0.500" width="6" height="6" fill="#fff" stroke="#808080" stroke-width="0.900"/><path d="M2 3.500h3" stroke="#000" stroke-width="0.800"/></svg>
<svg class="a" style="left:26.5px;top:129px" width="7" height="7" viewBox="0 0 7 7"><rect x="0.500" y="0.500" width="6" height="6" fill="#fff" stroke="#808080" stroke-width="0.900"/><path d="M2 3.500h3" stroke="#000" stroke-width="0.800"/></svg>
<svg class="a" style="left:26.5px;top:169.5px" width="7" height="7" viewBox="0 0 7 7"><rect x="0.500" y="0.500" width="6" height="6" fill="#fff" stroke="#808080" stroke-width="0.900"/><path d="M2 3.500h3" stroke="#000" stroke-width="0.800"/><path d="M3.500 2v3" stroke="#000" stroke-width="0.800"/></svg>
<svg class="a" style="left:12px;top:99px" width="12" height="12" viewBox="0 0 12 12"><rect x="1" y="1" width="9.500" height="8" fill="#fff" stroke="#000" stroke-width="0.900"/><path d="M1 2h9.500" stroke="#000080" stroke-width="1.800"/><path d="M3 4.500l3 3M3 7l2-2" stroke="#404040" stroke-width="0.800"/><rect x="5" y="6.500" width="5" height="5" fill="#c0c0ff" stroke="#000080" stroke-width="0.800"/><rect x="1.500" y="5" width="3" height="5.500" fill="#d0d0d0" stroke="#404040" stroke-width="0.700"/></svg>
<svg class="a" style="left:25px;top:112.5px" width="13" height="12" viewBox="0 0 13 12"><rect x="1" y="1" width="10.500" height="8" fill="#fff" stroke="#000" stroke-width="0.900"/><path d="M1 2h10.500" stroke="#000080" stroke-width="1.800"/><path d="M3 4.500h2M6 4.500h2M9 4.500h1.500M3 6.500h2M6 6.500h2" stroke="#404040" stroke-width="0.900"/><rect x="0.500" y="6.500" width="4" height="5" fill="#d0d0d0" stroke="#404040" stroke-width="0.700"/><rect x="7" y="7" width="5" height="4.500" fill="#c0c0c0" stroke="#404040" stroke-width="0.700"/></svg>
<svg class="a" style="left:38.5px;top:127.5px" width="13" height="11" viewBox="0 0 13 11"><path d="M0.500 9.500v-7h3l1 1h5v2" fill="#f0e890" stroke="#605000" stroke-width="0.800"/><path d="M0.500 9.500l2.500-4h9l-2.500 4z" fill="#e8d860" stroke="#605000" stroke-width="0.800"/></svg>
<svg class="a" style="left:39px;top:168px" width="12" height="11" viewBox="0 0 12 11"><path d="M0.500 9.500v-8h3.500l1 1.200h6v6.800z" fill="#f0e070" stroke="#605000" stroke-width="0.800"/><path d="M1 3.500h9.500" stroke="#fff8c0" stroke-width="0.800"/></svg>
<svg class="a" style="left:39px;top:181.5px" width="12" height="11" viewBox="0 0 12 11"><path d="M0.500 9.500v-8h3.500l1 1.200h6v6.800z" fill="#f0e070" stroke="#605000" stroke-width="0.800"/><path d="M1 3.500h9.500" stroke="#fff8c0" stroke-width="0.800"/></svg>
<svg class="a" style="left:53px;top:141px" width="9" height="11" viewBox="0 0 9 11"><path d="M0.500 0.500h5.500l2 2v7.500h-7.500z" fill="#fff" stroke="#000" stroke-width="0.800"/><path d="M4.200 2.500v3M3 4.500l1.200 1.300 1.200-1.300" stroke="#0000c0" stroke-width="0.800" fill="none"/><path d="M2 7.500h4.500M2 8.800h4.500" stroke="#404040" stroke-width="0.500"/></svg>
<svg class="a" style="left:53px;top:154.5px" width="9" height="11" viewBox="0 0 9 11"><path d="M0.500 0.500h5.500l2 2v7.500h-7.500z" fill="#fff" stroke="#000" stroke-width="0.800"/><path d="M4.200 2.500v3M3 4.500l1.200 1.300 1.200-1.300" stroke="#0000c0" stroke-width="0.800" fill="none"/><path d="M2 7.500h4.500M2 8.800h4.500" stroke="#404040" stroke-width="0.500"/></svg>
<svg class="a" style="left:40px;top:195.5px" width="9" height="11" viewBox="0 0 9 11"><path d="M0.500 0.500h5.500l2 2v7.500h-7.500z" fill="#fff" stroke="#000" stroke-width="0.800"/><path d="M2 3.500h4.500M2 5h4.500M2 6.500h4.500M2 8h4.500" stroke="#303030" stroke-width="0.600"/></svg>
<div class="a" style="left:6.5px;top:403.5px;width:40px;height:15.5px;background:#d4d0c8;border:1px solid;border-color:#d4d0c8 #404040 #404040 #fff;border-top:none;border-radius:0 0 2px 2px;box-shadow:inset -1px -1px 0 #808080;overflow:hidden"><div class="t" style="left:18.5px;top:3.5px;font-size:10px;color:#303030;transform:scaleX(0.78);transform-origin:0 50%">ClassView</div></div>
<div class="a" style="left:90.5px;top:403.5px;width:40.5px;height:15.5px;background:#d4d0c8;border:1px solid;border-color:#d4d0c8 #404040 #404040 #fff;border-top:none;border-radius:0 0 2px 2px;box-shadow:inset -1px -1px 0 #808080;overflow:hidden"><div class="t" style="left:17.5px;top:3.5px;font-size:10px;color:#303030;transform:scaleX(0.78);transform-origin:0 50%">VA View</div></div>
<div class="a" style="left:131.5px;top:403.5px;width:41px;height:15.5px;background:#d4d0c8;border:1px solid;border-color:#d4d0c8 #404040 #404040 #fff;border-top:none;border-radius:0 0 2px 2px;box-shadow:inset -1px -1px 0 #808080;overflow:hidden"><div class="t" style="left:17.8px;top:3.5px;font-size:10px;color:#303030;transform:scaleX(0.78);transform-origin:0 50%">VA Outline</div></div>
<div class="a" style="left:47.5px;top:402.5px;width:43px;height:18.5px;background:#d4d0c8;border:1px solid;border-color:#d4d0c8 #404040 #404040 #fff;border-top:none;border-radius:0 0 2px 2px;box-shadow:inset -1px -1px 0 #808080;overflow:hidden;border-left-color:#fff"><div class="t" style="left:19.200px;top:6px;font-size:10px;color:#303030;transform:scaleX(0.78);transform-origin:0 50%">FileView</div></div>
<svg class="a" style="left:9.5px;top:406.5px" width="13" height="11" viewBox="0 0 13 11"><rect x="0.500" y="0.500" width="4" height="4" fill="#0000e0"/><rect x="8" y="2" width="3.500" height="3.500" fill="#e000e0"/><rect x="8" y="6.500" width="3.500" height="3.500" fill="#00d8d8"/></svg>
<svg class="a" style="left:53px;top:408.5px" width="9" height="11" viewBox="0 0 9 11"><path d="M0.500 0.500h5.500l2 2v7.500h-7.500z" fill="#fff" stroke="#404040" stroke-width="0.800"/><path d="M2 3.500h4M2 5h4M2 6.500h4M2 8h4" stroke="#202020" stroke-width="0.700"/></svg>
<svg class="a" style="left:94px;top:405.5px" width="11" height="10" viewBox="0 0 11 10"><ellipse cx="5.200" cy="5.500" rx="5" ry="4" fill="#f06820"/><ellipse cx="4" cy="4.500" rx="2.200" ry="1.300" fill="#ff9858"/><path d="M3 1.800l2.200 0.800 2.200-0.800" stroke="#305020" stroke-width="1.100" fill="none"/></svg>
<svg class="a" style="left:135.5px;top:405.5px" width="12" height="12" viewBox="0 0 12 12"><ellipse cx="5.200" cy="5.500" rx="5" ry="4" fill="#f06820"/><ellipse cx="4" cy="4.500" rx="2.200" ry="1.300" fill="#ff9858"/><path d="M3 1.800l2.200 0.800 2.200-0.800" stroke="#305020" stroke-width="1.100" fill="none"/><rect x="6.500" y="6" width="4" height="5.500" fill="#e8e8f8" stroke="#606080" stroke-width="0.600"/></svg>
<div class="sunk" style="left:183px;top:97px;width:720px;height:328px;"></div>
<div class="a" style="left:185px;top:99px;width:12.8px;height:313px;background:#eae8e3"></div>
<div class="a" style="left:891px;top:99px;width:11px;height:313px;background:#eae8e3"></div>
<div class="btn3d" style="left:891px;top:99px;width:11px;height:3.5px;box-shadow:none;border-color:#fff #404040 #404040 #fff"></div>
<div class="btn3d" style="left:891px;top:103.5px;width:11px;height:11px;"><svg class="a" style="left:0;top:0" width="11" height="11"><path d="M2.5 6.3h5l-2.500-2.800z" fill="#000"/></svg></div>
<div class="btn3d" style="left:891px;top:161px;width:11px;height:15.5px;"></div>
<div class="btn3d" style="left:891px;top:399.5px;width:11px;height:11.5px;"><svg class="a" style="left:0;top:0" width="11" height="11.5"><path d="M2.5 3.95h5l-2.500 2.800z" fill="#000"/></svg></div>
<div class="a" style="left:184.5px;top:412px;width:706.5px;height:12px;background:#eae8e3"></div>
<div class="btn3d" style="left:184.5px;top:412px;width:3px;height:12px;box-shadow:none;border-color:#fff #404040 #404040 #fff"></div>
<div class="btn3d" style="left:188px;top:412.5px;width:9.5px;height:11px;"><svg class="a" style="left:0;top:0" width="9.5" height="11"><path d="M5.55 2.5v5l-2.800-2.500z" fill="#000"/></svg></div>
<div class="btn3d" style="left:197.5px;top:412.5px;width:22.5px;height:11px;"></div>
<div class="btn3d" style="left:879.5px;top:412.5px;width:11px;height:11px;"><svg class="a" style="left:0;top:0" width="11" height="11"><path d="M3.7 2.5v5l2.800-2.500z" fill="#000"/></svg></div>
<div class="a" style="left:891px;top:412px;width:11px;height:12px;background:#d4d0c8"></div>
<div class="a" style="left:184.5px;top:98.5px;width:706.5px;height:313.5px;overflow:hidden"><div class="code" style="left:13.700px;top:0.800px">}

<span class="k">void</span> <span class="f">sort_arry_tong</span>(){

    <span class="k">int</span> <span class="v">arry</span>[10] = {3,4,6,2,1,6,6,7,0,4};
    <span class="k">int</span> <span class="v">arry_none</span>[10] = {0};
    <span class="k">int</span> <span class="v">i</span> = 0;

    <span class="k">for</span>(<span class="v">i</span>;<span class="v">i</span> &lt; 10 ;<span class="v">i</span>++){

        <span class="k">int</span> <span class="v">temp</span> = 0;
        <span class="v">temp</span> = <span class="v">arry</span>[<span class="v">i</span>];
        <span class="v">arry_none</span>[<span class="v">temp</span>]++;
    }

    <span class="k">int</span> <span class="v">j</span> = 0;
    <span class="k">for</span>(<span class="v">j</span>;<span class="v">j</span> &lt; 10;<span class="v">j</span>++){

        <span class="k">int</span> <span class="v">j_2</span> = 0;
        <span class="k">for</span>(<span class="v">j_2</span>;<span class="v">j_2</span> &lt; <span class="v">arry_none</span>[<span class="v">j</span>];<span class="v">j_2</span>++){
            <span class="f">printf</span>("%d",<span class="v">j</span>);
        }
    }
}

<span class="k">void</span> <span class="f">Class_age</span>(){</div></div>
<div class="a" style="left:0px;top:427.5px;width:903px;height:1px;background:#404040"></div>
<div class="a" style="left:0px;top:428.5px;width:903px;height:1px;background:#808080"></div>
<div class="btn3d" style="left:2.5px;top:431px;width:8.5px;height:8.5px;box-shadow:none;border-color:#fff #808080 #808080 #fff"><svg class="a" style="left:0;top:0" width="8" height="8"><path d="M1.500 1.500l4 4M5.500 1.500l-4 4" stroke="#000" stroke-width="0.900"/></svg></div>
<div class="btn3d" style="left:2.5px;top:442px;width:8.5px;height:8.5px;box-shadow:none;border-color:#fff #808080 #808080 #fff"><svg class="a" style="left:0;top:0" width="8" height="8"><path d="M5 1v5l-3-2.500z" fill="#808080"/></svg></div>
<div class="a" style="left:4px;top:453px;width:1px;height:48px;background:#fff"></div>
<div class="a" style="left:5px;top:453px;width:1px;height:48px;background:#808080"></div>
<div class="a" style="left:7px;top:453px;width:1px;height:48px;background:#fff"></div>
<div class="a" style="left:8px;top:453px;width:1px;height:48px;background:#808080"></div>
<div class="sunk" style="left:12.5px;top:430.5px;width:887px;height:71.5px;"></div>
<div class="a" style="left:887.5px;top:432.5px;width:10.5px;height:55.5px;background:#eae8e3"></div>
<div class="btn3d" style="left:887.5px;top:432.5px;width:10.5px;height:11px;"><svg class="a" style="left:0;top:0" width="10.5" height="11"><path d="M2.25 6.3h5l-2.500-2.800z" fill="#000"/></svg></div>
<div class="btn3d" style="left:887.5px;top:443.5px;width:10.5px;height:32.5px;"></div>
<div class="btn3d" style="left:887.5px;top:476px;width:10.5px;height:11.5px;"><svg class="a" style="left:0;top:0" width="10.5" height="11.5"><path d="M2.25 3.95h5l-2.500 2.800z" fill="#000"/></svg></div>
<div class="a" style="left:14.5px;top:488px;width:873px;height:12.5px;background:#eae8e3"></div>
<div class="a" style="left:887.5px;top:488px;width:10.5px;height:12.5px;background:#d4d0c8"></div>
<div class="btn3d" style="left:14.3px;top:488.3px;width:11px;height:10.5px;"><svg class="a" style="left:0;top:0" width="11" height="10.5"><path d="M6.3 2.25v5l-2.800-2.500z" fill="#808080"/></svg></div>
<div class="btn3d" style="left:25.3px;top:488.3px;width:11.5px;height:10.5px;"><svg class="a" style="left:0;top:0" width="11.5" height="10.5"><path d="M3.95 2.25v5l2.800-2.500z" fill="#000"/></svg></div>
<svg class="a" style="left:36.8px;top:488px" width="190" height="12.5" viewBox="0 0 190 12.5"><path d="M0 0.500h183" stroke="#000" stroke-width="1"/><path d="M0 0l4.900 11.300h34.800l5.500-11.300z" fill="#fff" stroke="#000" stroke-width="0.900"/><path d="M77.200 0.500l4.800 10.800M77.500 11.300l2.500-5.500M39.700 11.300h38.500M82 11.300h92M173.200 0.500l4.800 10.800M173.500 11.300l2.500-5.500" fill="none" stroke="#000" stroke-width="0.900"/><path d="M0.800 0.500h43.800" stroke="#fff" stroke-width="1.300"/></svg>
<div class="t" style="left:45px;top:489.1px;font-size:10px;font-family:IPAGothic,'Liberation Mono',monospace;font-weight:bold;letter-spacing:0.650px;-webkit-text-stroke:0.200px #000">Build</div>
<div class="t" style="left:85px;top:489.15px;font-size:9.9px;font-family:IPAGothic,'Liberation Mono',monospace;color:#202020">Debug</div>
<div class="t" style="left:126.5px;top:489.15px;font-size:9.9px;font-family:IPAGothic,'Liberation Mono',monospace;color:#202020">Find in Files 1</div>
<div class="a" style="left:220.5px;top:488.5px;width:3px;height:11.5px;background:#d4d0c8;border:1px solid;border-color:#fff #404040 #404040 #fff"></div>
<div class="btn3d" style="left:224.5px;top:488.5px;width:8.5px;height:11px;"><svg class="a" style="left:0;top:0" width="8.5" height="11"><path d="M5.05 2.5v5l-2.800-2.500z" fill="#000"/></svg></div>
<div class="btn3d" style="left:233px;top:488.5px;width:26px;height:11px;"></div>
<div class="btn3d" style="left:877px;top:488.5px;width:10.5px;height:11px;"><svg class="a" style="left:0;top:0" width="10.5" height="11"><path d="M3.45 2.5v5l2.800-2.500z" fill="#000"/></svg></div>
<div class="t" style="left:4.7px;top:509.45px;font-size:9.7px;font-weight:bold">Ready</div>
<div class="a" style="left:723.5px;top:507px;width:78.5px;height:13.5px;border:1px solid;border-color:#808080 #fff #fff #808080"><div class="t" style="left:3px;top:1.800px;font-size:9.200px;font-weight:bold;left:4px;font-size:9.5px">Ln 444, Col 22</div></div>
<div class="a" style="left:803.5px;top:507px;width:22px;height:13.5px;border:1px solid;border-color:#808080 #fff #fff #808080"><div class="t" style="left:3px;top:1.800px;font-size:9.200px;color:#808080;left:1.500px;font-size:9px">REC</div></div>
<div class="a" style="left:827px;top:507px;width:22.5px;height:13.5px;border:1px solid;border-color:#808080 #fff #fff #808080"><div class="t" style="left:3px;top:1.800px;font-size:9.200px;color:#808080;left:1.500px;font-size:9px">COL</div></div>
<div class="a" style="left:851px;top:507px;width:22.5px;height:13.5px;border:1px solid;border-color:#808080 #fff #fff #808080"><div class="t" style="left:3px;top:1.800px;font-size:9.200px;color:#808080;left:1.500px;font-size:9px">OVR</div></div>
<div class="a" style="left:874.5px;top:507px;width:28.5px;height:13.5px;border:1px solid;border-color:#808080 #fff #fff #808080"><div class="t" style="left:3px;top:1.800px;font-size:9.200px;color:#808080;left:1.500px;font-size:9px">READ</div></div>
<div class="a" style="left:0px;top:522.3px;width:903px;height:1px;background:#fff"></div>
<div class="a" style="left:0px;top:541.5px;width:903px;height:2px;background:#d4d0c8"></div>
<div class="btn3d" style="left:2px;top:524.4px;width:32.7px;height:16.1px;"><svg class="a" style="left:1.200px;top:1.500px" width="11" height="11" viewBox="0 0 10 10"><path d="M0.500 1.500c1.500-1 2.500-1 4 0v3c-1.500-1-2.500-1-4 0z" fill="#e03010"/><path d="M5.200 1.700c1.500 1 2.500 1 4 0v3c-1.500 1-2.500 1-4 0z" fill="#30a020"/><path d="M0.500 5.300c1.500-1 2.500-1 4 0v3c-1.500-1-2.500-1-4 0z" fill="#2050d0"/><path d="M5.200 5.500c1.500 1 2.500 1 4 0v3c-1.500 1-2.500 1-4 0z" fill="#f0c010"/></svg><div class="t" style="left:13.200px;top:3.400px;font-size:8px">开始</div></div>
<div class="btn3d" style="left:38.5px;top:524.6px;width:113px;height:15.9px;overflow:hidden;"><svg class="a" style="left:3px;top:2px" width="10" height="10" viewBox="0 0 10 10"><rect x="0" y="0" width="10" height="10" fill="#1018b0"/><ellipse cx="5" cy="5" rx="3.500" ry="2" fill="none" stroke="#c0c8ff" stroke-width="0.700"/><circle cx="5" cy="5" r="1.100" fill="#c0c8ff"/></svg><div class="t" style="left:15.500px;top:3.95px;font-size:7.3px">DTDebug - CRACKME.EX...</div></div>
<div class="btn3d" style="left:153.5px;top:524.6px;width:112px;height:15.9px;overflow:hidden;"><svg class="a" style="left:3px;top:2px" width="10" height="10" viewBox="0 0 10 10"><path d="M0.500 8.500v-6.500h3l1 1h5v5.500z" fill="#f8e070" stroke="#a08000" stroke-width="0.700"/><path d="M1 4h8.500" stroke="#fff8c8" stroke-width="0.700"/></svg><div class="t" style="left:15.500px;top:3.75px;font-size:7.7px">system32</div></div>
<div class="btn3d" style="left:267.5px;top:524.6px;width:113px;height:15.9px;overflow:hidden;"><svg class="a" style="left:3px;top:2px" width="10" height="10" viewBox="0 0 10 10"><path d="M0.500 8.500v-6.500h3l1 1h5v5.500z" fill="#f8e070" stroke="#a08000" stroke-width="0.700"/><path d="M1 4h8.500" stroke="#fff8c8" stroke-width="0.700"/></svg><div class="t" style="left:15.500px;top:3.4px;font-size:8.4px">1111</div></div>
<div class="btn3d" style="left:383px;top:524.6px;width:113px;height:15.9px;overflow:hidden;"><svg class="a" style="left:3px;top:2px" width="10" height="10" viewBox="0 0 10 10"><path d="M1.500 0.500h7v9h-7z" fill="#60b0f0" stroke="#3070c0" stroke-width="0.700"/><path d="M3 3h4M3 5h4M3 7h4" stroke="#e0f0ff" stroke-width="0.700"/></svg><div class="t" style="left:15.500px;top:3.45px;font-size:8.3px">无标题 - 记事本</div></div>
<div class="btn3d" style="left:498px;top:524.6px;width:113px;height:15.9px;overflow:hidden;"><svg class="a" style="left:3px;top:2px" width="10" height="10" viewBox="0 0 10 10"><rect x="0" y="0" width="10" height="10" fill="#000" stroke="#d00000" stroke-width="1"/><path d="M2.500 7.500v-5h2v2.500h-2M6 2.500h2M6 5h1.500M6 7.500h2M6 2.500v5" stroke="#fff" stroke-width="0.700" fill="none"/></svg><div class="t" style="left:15.500px;top:3.65px;font-size:7.9px">PETool v1.0.0.5</div></div>
<div class="btn3d" style="left:613.5px;top:524.6px;width:113px;height:15.9px;overflow:hidden;background:#f0eeea;border-color:#404040 #fff #fff #404040;box-shadow:inset 1px 1px 0 #808080;"><svg class="a" style="left:3px;top:2px" width="10" height="10" viewBox="0 0 10 10"><path d="M0.500 6.500c0-4 3-4 4.500-1.500s4.500 2.500 4.500-1.500" fill="none" stroke="#e8c800" stroke-width="1.800"/><path d="M0.500 3.500c0 4 3 4 4.500 1.500s4.500-2.500 4.500 1.500" fill="none" stroke="#18a018" stroke-width="1.800"/><path d="M1.500 2l7 6" stroke="#e01010" stroke-width="1.600"/><path d="M1 5l2 2.500" stroke="#2030d0" stroke-width="1.600"/></svg><div class="t" style="left:15.500px;top:3.65px;font-size:7.9px">1111 - Microsoft Visual C...</div></div>
<svg class="a" style="left:809px;top:528px" width="14" height="11" viewBox="0 0 14 11"><path d="M3 2.500c2-2 5-2 6 0.500" fill="none" stroke="#404040" stroke-width="0.700"/><rect x="0.800" y="3.500" width="12" height="6.500" rx="1" fill="#d8d8d8" stroke="#404040" stroke-width="0.800"/><path d="M2.500 5.500h9M2.500 7h9M3.500 8.500h7" stroke="#404040" stroke-width="0.700" stroke-dasharray="1 0.600"/></svg>
<svg class="a" style="left:830.5px;top:527.5px" width="11" height="12" viewBox="0 0 11 12"><path d="M0.500 0.500h9.500v9h-3l-1.500 2v-2h-5z" fill="#fff" stroke="#000" stroke-width="0.800"/><path d="M2 10.500h3" stroke="#e8e000" stroke-width="1.500"/><text x="5.200" y="8" font-size="8" font-weight="bold" text-anchor="middle" fill="#0000a0" font-family="Liberation Sans,sans-serif">?</text></svg>
<div class="a" style="left:844.5px;top:526px;width:1px;height:14px;background:#808080"></div>
<div class="a" style="left:845.5px;top:526px;width:1px;height:14px;background:#fff"></div>
<svg class="a" style="left:848.5px;top:528px" width="7" height="12" viewBox="0 0 7 12"><rect x="1.500" y="1.800" width="3.500" height="2.300" fill="none" stroke="#000" stroke-width="0.700"/><path d="M2.500 1.800v-1h3.500v2.200h-1" fill="none" stroke="#000" stroke-width="0.700"/><path d="M2 8.500h3.500l-1.750 2z" fill="#000"/></svg>
<div class="a" style="left:860.5px;top:525.5px;width:41px;height:15px;border:1px solid;border-color:#808080 #fff #fff #808080"><div class="t" style="left:4px;top:2px;font-size:10px;font-weight:bold">«</div><div class="t" style="left:17px;top:3.400px;font-size:8.200px">2:00</div></div>
</div><!--XP-END-->
<div class="a" style="left:1022.700px;top:36px;width:1.300px;height:562.500px;background:#6e6e6e"></div>
<!--VS-START--><div id="vmstatus" class="a">
<div class="t" style="left:1px;top:3.700px;font-size:7.230px;color:#e8e8e8">要将输入定向到该虚拟机，请将鼠标指针移入其中或按 Ctrl+G。</div>
<svg class="a" style="left:926.5px;top:3.5px" width="10" height="9" viewBox="0 0 10 9"><path d="M2 3.500l1-2.500h4l1 2.500" fill="none" stroke="#9a9a9a" stroke-width="0.800"/><rect x="0.500" y="3.500" width="9" height="4" fill="none" stroke="#9a9a9a" stroke-width="0.800"/><circle cx="8" cy="7.3" r="1.300" fill="#58c840"/></svg>
<svg class="a" style="left:939px;top:3.5px" width="9" height="9" viewBox="0 0 9 9"><circle cx="4.500" cy="4.500" r="3.800" fill="none" stroke="#6a6a6a" stroke-width="0.800"/><path d="M2 2l5 5" stroke="#6a6a6a" stroke-width="0.800"/></svg>
<svg class="a" style="left:950px;top:3.5px" width="9" height="9" viewBox="0 0 9 9"><path d="M0.500 0.500h6.500l1.500 1.500v6.500h-8z" fill="none" stroke="#6a6a6a" stroke-width="0.800"/><rect x="2.500" y="0.500" width="4" height="2.500" fill="none" stroke="#6a6a6a" stroke-width="0.700"/><rect x="2" y="5" width="5" height="3.500" fill="none" stroke="#6a6a6a" stroke-width="0.700"/></svg>
<svg class="a" style="left:962.5px;top:3.5px" width="10" height="9" viewBox="0 0 10 9"><rect x="0.500" y="0.500" width="5" height="4" fill="none" stroke="#9a9a9a" stroke-width="0.800"/><rect x="3.500" y="3.500" width="5" height="4" fill="#2b2b2b" stroke="#9a9a9a" stroke-width="0.800"/><circle cx="8.2" cy="7.5" r="1.300" fill="#58c840"/></svg>
<svg class="a" style="left:973.5px;top:3.5px" width="9" height="9" viewBox="0 0 9 9"><path d="M2 3v-2.500h5v2.500M2 6.500v2h5v-2" fill="none" stroke="#6a6a6a" stroke-width="0.800"/><rect x="0.500" y="3" width="8" height="3.500" fill="none" stroke="#6a6a6a" stroke-width="0.800"/></svg>
<svg class="a" style="left:985.5px;top:3.5px" width="10" height="9" viewBox="0 0 10 9"><path d="M0.500 3h2l2.500-2.500v8l-2.500-2.500h-2z" fill="none" stroke="#9a9a9a" stroke-width="0.800"/><path d="M6.500 2.500c1 1 1 3 0 4" fill="none" stroke="#9a9a9a" stroke-width="0.700"/><circle cx="8" cy="7.3" r="1.300" fill="#58c840"/></svg>
<svg class="a" style="left:997.5px;top:2px" width="2" height="11" viewBox="0 0 2 11"><rect x="0" y="0" width="1.200" height="11" fill="#c8c8c8"/></svg>
<svg class="a" style="left:1001.5px;top:3px" width="10" height="10" viewBox="0 0 10 10"><path d="M0.500 0.500h9v6.500l-2.500 2.500h-6.500z" fill="none" stroke="#b0b0b0" stroke-width="0.900"/><path d="M9.500 7h-2.500v2.500" fill="none" stroke="#b0b0b0" stroke-width="0.800"/></svg>
</div><!--VS-END-->
<!--W11-START--><div id="w11" class="a">
<div class="a" style="left:0;top:0;width:1024px;height:1px;background:#343943"></div>
<svg class="a" style="left:12px;top:8px" width="14" height="14" viewBox="0 0 14 14"><defs><linearGradient id="wg" x1="0" y1="0" x2="1" y2="1"><stop offset="0" stop-color="#6fd8ff"/><stop offset="1" stop-color="#1a8fe0"/></linearGradient></defs><rect x="0" y="0" width="6.600" height="6.600" rx="0.600" fill="url(#wg)"/><rect x="7.400" y="0" width="6.600" height="6.600" rx="0.600" fill="url(#wg)"/><rect x="0" y="7.400" width="6.600" height="6.600" rx="0.600" fill="url(#wg)"/><rect x="7.400" y="7.400" width="6.600" height="6.600" rx="0.600" fill="url(#wg)"/></svg>
<div class="a" style="left:35px;top:5px;width:60px;height:19.500px;border-radius:10px;background:#2b303a"></div>
<svg class="a" style="left:53px;top:10.5px" width="9" height="9" viewBox="0 0 9 9"><circle cx="3.600" cy="3.600" r="2.900" fill="none" stroke="#f0f0f0" stroke-width="1"/><path d="M5.800 5.800l2.500 2.500" stroke="#f0f0f0" stroke-width="1.100"/></svg>
<div class="t" style="left:64px;top:11.500px;font-size:7px;color:#e8e8e8">搜索</div>
<svg class="a" style="left:103px;top:8px" width="15" height="14" viewBox="0 0 15 14"><rect x="0.500" y="4" width="9" height="9" rx="1" fill="#6a6d73"/><rect x="4" y="0.500" width="10" height="9.500" rx="1" fill="#f2f2f2"/></svg>
<div class="a" style="left:124px;top:2.500px;width:25px;height:25px;border-radius:3px;background:#2a2f39"></div>
<svg class="a" style="left:128.5px;top:6.5px" width="17" height="16" viewBox="0 0 17 16"><rect x="1.200" y="5.800" width="10" height="8.600" rx="1.800" fill="none" stroke="#f38b00" stroke-width="2.300"/><rect x="4.800" y="1.700" width="9.400" height="9" rx="1.800" fill="none" stroke="#1d9ad6" stroke-width="2.300"/><path d="M4.800 5.800h6.400v2.500" fill="none" stroke="#f38b00" stroke-width="2.300"/></svg>
<div class="a" style="left:131.500px;top:24.500px;width:10px;height:1.800px;border-radius:1px;background:#4cc2ff"></div>
<svg class="a" style="left:157px;top:8px" width="12" height="13" viewBox="0 0 12 13"><path d="M1.500 12v-7l-0.500-4 3 2.500h3.500l3-2.500-0.500 4v7z" fill="#1c3566"/><circle cx="4" cy="6.500" r="0.700" fill="#6fa8ff"/><circle cx="7.700" cy="6.500" r="0.700" fill="#6fa8ff"/></svg>
<svg class="a" style="left:183.5px;top:8.5px" width="12" height="12" viewBox="0 0 12 12"><circle cx="6" cy="6" r="5.800" fill="#f0f0f0"/><circle cx="6" cy="6" r="3.300" fill="none" stroke="#303030" stroke-width="1"/><path d="M6 2.700v6.600M3.200 4.300l5.600 3.400M8.800 4.300l-5.600 3.400" stroke="#303030" stroke-width="0.600"/></svg>
<svg class="a" style="left:209px;top:8px" width="12" height="14" viewBox="0 0 12 14"><path d="M3 0.500h6l2.500 2.500v9.500h-8.500z" fill="#f4f4f4"/><circle cx="5" cy="7.500" r="3" fill="#fff" stroke="#e8861c" stroke-width="1.600"/><path d="M3 10l-2.500 3" stroke="#e8861c" stroke-width="1.800"/></svg>
<svg class="a" style="left:235px;top:8px" width="15" height="15" viewBox="0 0 15 15"><circle cx="7.500" cy="7.500" r="7.200" fill="#e33b2e"/><path d="M7.500 7.500l-6.300 3.500a7.200 7.200 0 0 0 6.300 3.700l3.200-7.200z" fill="#2da44e"/><path d="M7.500 7.500h7.200a7.200 7.200 0 0 1-7.200 7.200l3.200-7.200z" fill="#fbc116"/><path d="M1.200 4a7.200 7.200 0 0 1 13.100 1h-6.800z" fill="#e33b2e"/><circle cx="7.500" cy="7.500" r="3.300" fill="#fff"/><circle cx="7.500" cy="7.500" r="2.600" fill="#4285f4"/></svg>
<svg class="a" style="left:261px;top:7.5px" width="15" height="15" viewBox="0 0 15 15"><defs><linearGradient id="eg" x1="0" y1="0" x2="1" y2="1"><stop offset="0" stop-color="#35c1f1"/><stop offset="0.600" stop-color="#1d78d0"/><stop offset="1" stop-color="#35d07a"/></linearGradient></defs><circle cx="7.500" cy="7.500" r="7.200" fill="url(#eg)"/><path d="M3.500 9c0-4 8-4.500 8.500-0.500c0 2-2.500 2-3.500 1.500c0.500 2 3 3 5 1.500a7 7 0 0 1-9 2.500c-1-1-1-3-1-5z" fill="#0c4a8c" opacity="0.750"/><circle cx="3.500" cy="11" r="3" fill="#6e7a80"/><circle cx="3.500" cy="10" r="1.100" fill="#d8dde0"/></svg>
<svg class="a" style="left:287px;top:8.5px" width="15" height="13" viewBox="0 0 15 13"><path d="M0.500 1.500h5l1.500 1.500h7.500v2h-14z" fill="#e8a820"/><rect x="0.500" y="3.500" width="14" height="9" rx="0.800" fill="#fcd45a"/><rect x="3.500" y="8.500" width="8" height="4" fill="#3a8ee0"/></svg>
<svg class="a" style="left:314px;top:7.5px" width="15" height="15" viewBox="0 0 15 15"><path d="M4.500 3.500v-1.500a1 1 0 0 1 1-1h4a1 1 0 0 1 1 1v1.500" fill="none" stroke="#e8e8e8" stroke-width="1"/><rect x="0.500" y="3.500" width="14" height="11" rx="1.500" fill="#f4f4f4"/><rect x="4.300" y="6" width="2.900" height="2.900" fill="#f25022"/><rect x="7.800" y="6" width="2.900" height="2.900" fill="#7fba00"/><rect x="4.300" y="9.500" width="2.900" height="2.900" fill="#00a4ef"/><rect x="7.800" y="9.500" width="2.900" height="2.900" fill="#ffb900"/></svg>
<svg class="a" style="left:340.5px;top:7.5px" width="15" height="15" viewBox="0 0 15 15"><circle cx="7.500" cy="8" r="6.800" fill="#1a6fe0"/><path d="M9 0.500c3 1.500 5.500 4.500 5 8.500c-0.500 3-3 5.500-6.500 5.500c-4 0-6.500-3-6.500-6c0-2 1-3.500 2-4c0 1 0.500 1.500 1 2c0.500-2.500 2.500-3 3-5c1 1 1.500 2 1.500 3c1.500 0 2.500 1.500 2 3c-0.500 1.500-2 2-3.500 1.500c1.500 1.500 5 1 5.500-2.500c0.300-2.500-1-4.500-3.500-6z" fill="#46b4ff"/><circle cx="7" cy="9" r="3" fill="#0d3fa0" opacity="0.600"/></svg>
<svg class="a" style="left:367px;top:7.5px" width="14" height="15" viewBox="0 0 14 15"><circle cx="7" cy="8" r="6.500" fill="#ff9a1a"/><path d="M8 0.500c3 1.500 5.500 4.500 5 8.500c-0.500 3-3 5.500-6.500 5.500c-4 0-6-3-6-6c0-2 1-3.500 2-4c0 1 0.500 1.500 1 2c0.500-2.500 2-3 2.500-5c1 1 1.500 2 1.500 3c1.500 0 2.500 1.500 2 3c-0.500 1.500-2 2-3.500 1.500c1.500 1.500 5 1 5.500-2.500c0.300-2.500-1-4.500-3.500-6z" fill="#e8501a"/><circle cx="6.500" cy="8.500" r="3.300" fill="#3a4fc8"/><path d="M3.500 7c1-1 3-1.500 5-0.500" stroke="#ffd23a" stroke-width="1.200" fill="none"/></svg>
<svg class="a" style="left:393.5px;top:8px" width="14" height="14" viewBox="0 0 14 14"><rect x="0" y="0" width="14" height="14" rx="2.500" fill="#0e0f12"/><path d="M7 2l4.500 2.500v5l-4.500 2.500-4.500-2.500v-5z" fill="none" stroke="#a8abb0" stroke-width="0.900"/><path d="M2.500 4.500l4.500 2.500 4.500-2.500M7 7v5" stroke="#a8abb0" stroke-width="0.900" fill="none"/></svg>
<svg class="a" style="left:420px;top:8px" width="14" height="14" viewBox="0 0 14 14"><path d="M7 0.500l2 4.300 4.700 0.500-3.500 3.200 1 4.700-4.200-2.400-4.200 2.400 1-4.700-3.500-3.200 4.700-0.500z" fill="#f4e06a" stroke="#e8d050" stroke-width="0.600" stroke-linejoin="round"/><circle cx="5.500" cy="6.500" r="0.500" fill="#806800"/><circle cx="8.500" cy="6.500" r="0.500" fill="#806800"/><path d="M5.500 8.500c1 1 2 1 3 0" fill="none" stroke="#806800" stroke-width="0.500"/></svg>
<svg class="a" style="left:446px;top:7.5px" width="14" height="15" viewBox="0 0 14 15"><ellipse cx="7" cy="7.500" rx="5.500" ry="6.300" fill="none" stroke="#e8202a" stroke-width="2.600"/></svg>
<svg class="a" style="left:472px;top:8px" width="15" height="14" viewBox="0 0 15 14"><circle cx="7.500" cy="7.500" r="6.500" fill="#f0641e"/><path d="M2 5c3-3 8-3.500 11-1" stroke="#ffd040" stroke-width="1.500" fill="none"/><ellipse cx="9" cy="8.500" rx="3.500" ry="2.800" fill="#f4f4f4"/><path d="M7.500 8.500l1.200 1.200 2.300-2.500" stroke="#f0641e" stroke-width="0.800" fill="none"/><path d="M3 3l4-1.500" stroke="#d02020" stroke-width="1.400"/></svg>
<svg class="a" style="left:501px;top:9px" width="10" height="11" viewBox="0 0 10 11"><path d="M1 10.500v-6l-0.500-3.500 2.500 2h3.500l2.500-2-0.500 3.500v6z" fill="#1c3566"/><circle cx="3.300" cy="5.500" r="0.600" fill="#6fa8ff"/><circle cx="6.500" cy="5.500" r="0.600" fill="#6fa8ff"/></svg>
<svg class="a" style="left:525px;top:8px" width="15" height="14" viewBox="0 0 15 14"><path d="M10.500 0.500l4 1.800v9.400l-4 1.800-6.500-5.500-2.500 2-1-0.700v-4.600l1-0.700 2.500 2z" fill="#8a5ad8"/><path d="M10.500 4l-4 3 4 3z" fill="#1b202b"/><path d="M10.500 0.500l4 1.800v9.400l-4 1.800z" fill="#b48af0"/></svg>
<svg class="a" style="left:552px;top:8px" width="15" height="15" viewBox="0 0 15 15"><circle cx="7.500" cy="7.500" r="7.200" fill="#f8d820"/><path d="M6.500 11v-7l4-1.200v2l-2.800 0.800v5.400" fill="none" stroke="#20b860" stroke-width="1.200"/><circle cx="5.800" cy="11" r="1.900" fill="#20b860"/></svg>
<svg class="a" style="left:578px;top:8px" width="15" height="14" viewBox="0 0 15 14"><rect x="0" y="0" width="15" height="14" rx="3" fill="#f25d8e"/><path d="M3 5v5M5 6.500v3.500M3 10h2M7 5v5M9 6.500v3.500M7 10h2M11 5v5" stroke="#fff" stroke-width="0.900" fill="none"/></svg>
<svg class="a" style="left:604px;top:8px" width="15" height="14" viewBox="0 0 15 14"><rect x="5" y="0.500" width="9.500" height="13" rx="1" fill="#21a366"/><rect x="5" y="0.500" width="9.500" height="6.500" fill="#33c481"/><rect x="9.700" y="0.500" width="4.800" height="13" fill="#107c41" opacity="0.600"/><rect x="0.500" y="3" width="8.500" height="8.500" rx="1" fill="#107c41"/><path d="M3 5l3.500 4.500M6.500 5l-3.500 4.500" stroke="#fff" stroke-width="1.100"/></svg>
<div class="a" style="left:267px;top:24.800px;width:3px;height:1.400px;border-radius:1px;background:#8a8d93"></div>
<div class="a" style="left:293px;top:24.800px;width:3px;height:1.400px;border-radius:1px;background:#8a8d93"></div>
<div class="a" style="left:346px;top:24.800px;width:3px;height:1.400px;border-radius:1px;background:#8a8d93"></div>
<div class="a" style="left:504.5px;top:24.800px;width:3px;height:1.400px;border-radius:1px;background:#8a8d93"></div>
<div class="a" style="left:531px;top:24.800px;width:3px;height:1.400px;border-radius:1px;background:#8a8d93"></div>
<div class="a" style="left:557.5px;top:24.800px;width:3px;height:1.400px;border-radius:1px;background:#8a8d93"></div>
<div class="a" style="left:583.5px;top:24.800px;width:3px;height:1.400px;border-radius:1px;background:#8a8d93"></div>
<div class="a" style="left:610px;top:24.800px;width:3px;height:1.400px;border-radius:1px;background:#8a8d93"></div>
<svg class="a" style="left:875px;top:11.5px" width="8" height="6" viewBox="0 0 8 6"><path d="M0.800 5l3.200-3.500 3.200 3.500" fill="none" stroke="#f0f0f0" stroke-width="0.900"/></svg>
<div class="t" style="left:893px;top:10px;font-size:9.500px;color:#f4f4f4">英</div>
<svg class="a" style="left:912px;top:10.5px" width="11" height="9" viewBox="0 0 11 9"><path d="M0.500 3c3-3.300 7-3.300 10 0M2.200 4.800c2-2.200 4.600-2.200 6.600 0M3.800 6.400c1-1.100 2.400-1.100 3.400 0" fill="none" stroke="#f0f0f0" stroke-width="0.900"/><circle cx="5.500" cy="7.800" r="0.800" fill="#f0f0f0"/></svg>
<svg class="a" style="left:926.5px;top:10px" width="11" height="10" viewBox="0 0 11 10"><path d="M0.500 3.500h2l2.500-2.500v8l-2.500-2.500h-2z" fill="none" stroke="#f0f0f0" stroke-width="0.900"/><path d="M6.500 3c1 1 1 3 0 4" fill="none" stroke="#f0f0f0" stroke-width="0.800"/><path d="M8 1.500c2 2 2 5 0 7" fill="none" stroke="#8a8d93" stroke-width="0.800"/></svg>
<svg class="a" style="left:940px;top:10px" width="12" height="10" viewBox="0 0 12 10"><rect x="2" y="3.500" width="8.500" height="5.500" rx="1" fill="#f0f0f0"/><rect x="10.500" y="5" width="1" height="2.500" fill="#f0f0f0"/><path d="M1 3.500c0-2 1.500-3 3.500-2.500l-0.500 1.500M3 0.500l1.500 0.500" stroke="#f0f0f0" stroke-width="0.900" fill="none"/></svg>
<div class="t" style="right:26px;top:6.100px;font-size:7.300px;color:#f4f4f4">2:00</div>
<div class="t" style="right:26px;top:15.300px;font-size:7.500px;color:#f4f4f4">2024/01/29</div>
<svg class="a" style="left:1003px;top:9.5px" width="9" height="11" viewBox="0 0 9 11"><path d="M4.500 0.500c2.300 0 3.300 1.700 3.300 3.500v2.500l1 1.500h-8.600l1-1.500v-2.500c0-1.800 1-3.500 3.300-3.500z" fill="#60c8f8"/><path d="M3.300 9h2.400c0 1.500-2.400 1.500-2.400 0z" fill="#60c8f8"/></svg>
</div><!--W11-END-->
</div>
</body>
</html>
